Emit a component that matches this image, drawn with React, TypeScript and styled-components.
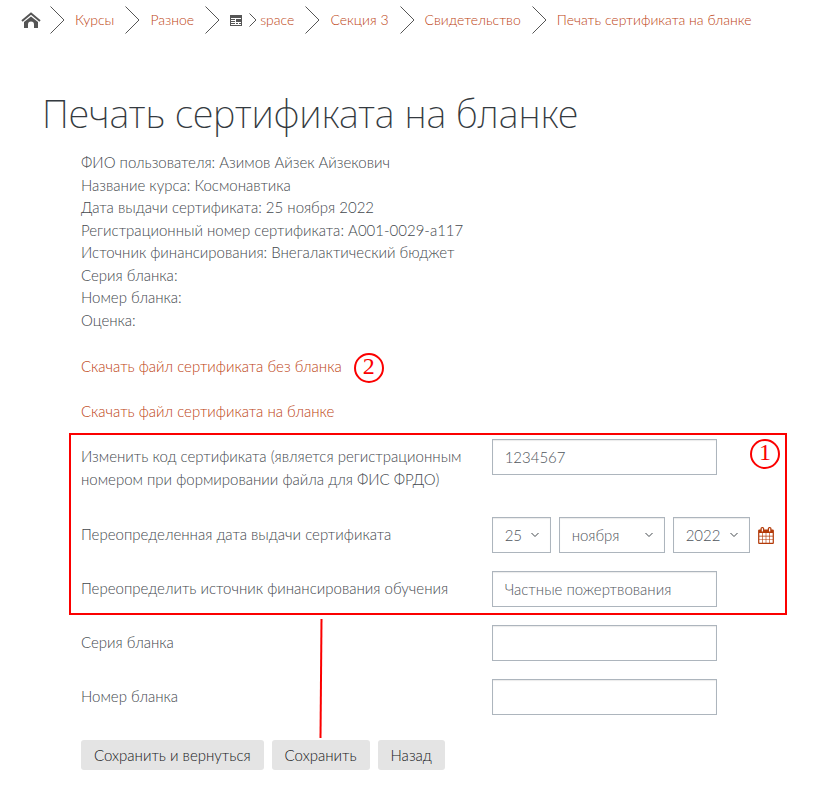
import React from "react";
import styled, { createGlobalStyle } from "styled-components";

const GlobalStyle = createGlobalStyle`
  *, *::before, *::after { box-sizing: border-box; }
  body {
    margin: 0;
    background: #fff;
    color: #43484d;
    font-family: Lato, "Noto Sans", sans-serif;
    font-size: 15px;
    font-weight: 300;
    line-height: 1.5;
  }
`;

const RED = "#fb0000";

const Page = styled.div`
  min-width: 720px;
`;

const Breadcrumbs = styled.nav`
  padding: 6px 21px 0;
  ol {
    display: flex;
    align-items: center;
    height: 28px;
    margin: 0;
    padding: 0;
    list-style: none;
    white-space: nowrap;
    font-size: 14px;
    line-height: 20px;
  }
  li {
    display: flex;
    align-items: center;
  }
`;

const Link = styled.a`
  color: #bd4413;
  text-decoration: none;
  &:hover { text-decoration: underline; }
`;

const HomeLink = styled(Link)`
  display: flex;
`;

const CrumbLink = styled(Link)`
  padding-right: 2px;
`;

const Separator = styled.svg`
  flex: none;
  margin: 0 10px 0 9px;
  fill: none;
  stroke: #555;
`;

const SmallSeparator = styled(Separator)`
  margin: 0 3px 0 7px;
`;

const Main = styled.main`
  padding: 55px 50px 20px 81px;
`;

const Title = styled.h1`
  margin: 0 0 14px -39px;
  color: #343a40;
  font-family: "Noto Sans", sans-serif;
  font-size: 38px;
  font-weight: 200;
  line-height: 48px;
`;

const Details = styled.ul`
  margin: 0 0 24px;
  padding: 0;
  list-style: none;
`;

const Download = styled.p`
  display: flex;
  align-items: center;
  gap: 12px;
  height: 22px;
  margin: 0 0 23px;
`;

const Marker = styled.span`
  flex: none;
  width: 30px;
  height: 30px;
  margin-top: 4px;
  border: 2px solid ${RED};
  border-radius: 50%;
  color: ${RED};
  font: 400 24px/22px "Liberation Serif", serif;
  text-align: center;
`;

const CornerMarker = styled(Marker)`
  position: absolute;
  top: -4px;
  right: -3px;
`;

const Form = styled.form`
  display: flex;
  flex-direction: column;
  gap: 18px;
`;

const Highlighted = styled.div`
  position: relative;
  display: flex;
  flex-direction: column;
  gap: 18px;
  margin-top: -6px;
  &::after {
    content: "";
    position: absolute;
    inset: -6px -10px -8px -12px;
    border: 2px solid ${RED};
    pointer-events: none;
  }
`;

const Pointer = styled.svg`
  position: absolute;
  top: calc(100% + 12px);
  left: 238px;
  stroke: ${RED};
  stroke-width: 2;
  pointer-events: none;
`;

const Field = styled.div<{ $lines?: number }>`
  display: grid;
  grid-template-columns: 59% minmax(0, 1fr);
  align-items: start;
  min-height: ${(p) => (p.$lines === 2 ? 60 : 36)}px;
`;

const Label = styled.label`
  margin: 6px 16px -6px 0;
`;

const TextInput = styled.input`
  width: 225px;
  max-width: 100%;
  height: 36px;
  padding: 0 12px;
  border: 1px solid #adb5bd;
  border-radius: 0;
  background: #fff;
  box-shadow: inset 0 1px 1px rgba(0, 0, 0, 0.08);
  color: #50565c;
  font: inherit;
`;

const DateRow = styled.div`
  display: flex;
  align-items: center;
  gap: 8px;
`;

const SelectBox = styled.div<{ $width: number }>`
  position: relative;
  width: ${(p) => p.$width}px;
  select {
    width: 100%;
    height: 36px;
    padding: 0 24px 0 12px;
    appearance: none;
    border: 1px solid #adb5bd;
    border-radius: 0;
    background: #fff;
    box-shadow: inset 0 1px 1px rgba(0, 0, 0, 0.08);
    color: #50565c;
    font: inherit;
  }
  svg {
    position: absolute;
    top: 14px;
    right: 12px;
    fill: none;
    stroke: #43484d;
    pointer-events: none;
  }
`;

const CalendarButton = styled.button`
  display: flex;
  padding: 0;
  border: 0;
  background: none;
  cursor: pointer;
`;

const Actions = styled.div`
  display: flex;
  gap: 8px;
  margin-top: 7px;
`;

const Button = styled.button`
  height: 30px;
  padding: 0 13px;
  border: 0;
  border-radius: 3px;
  background: #e4e4e4;
  color: #16181a;
  font: inherit;
`;

const HomeIcon = () => (
  <svg width="20" height="16" viewBox="0 0 20 16" aria-hidden="true">
    <path d="M1 9 10 1.500 19 9" fill="none" stroke="#555" strokeWidth="2" />
    <path d="M3 10 10 4.500l7 5.500V16h-4v-3.500a3 3 0 0 0-6 0V16H3z" fill="#555" />
  </svg>
);

const PageIcon = () => (
  <svg width="12" height="11" viewBox="0 0 12 11" fill="#555" aria-hidden="true">
    <path d="M0 0h12v11H0zM1 3v7h10V3z" fillRule="evenodd" />
    <path d="M1 4h4v1H1zM1 6h4v1H1zM1 8h4v1H1zM6 4h5v3H6zM6 8h2v1H6zM9 8h2v1H9z" />
  </svg>
);

const BigChevron = () => (
  <Separator width="15" height="28" viewBox="0 0 15 28" aria-hidden="true">
    <path d="M.5.5 14 14 .5 27.500" />
  </Separator>
);

const CalendarIcon = () => (
  <svg width="16" height="17" viewBox="0 0 1664 1792" fill="#b33a08" aria-hidden="true">
    <path d="M128 1664h288v-288h-288v288zm352 0h320v-288h-320v288zm-352-352h288v-320h-288v320zm352 0h320v-320h-320v320zm-352-384h288v-288h-288v288zm736 736h320v-288h-320v288zm-384-736h320v-288h-320v288zm768 736h288v-288h-288v288zm-384-352h320v-320h-320v320zm-352-864v-288q0-13-9.500-22.500t-22.500-9.500h-64q-13 0-22.500 9.500t-9.500 22.500v288q0 13 9.500 22.500t22.500 9.500h64q13 0 22.500-9.500t9.500-22.500zm736 864h288v-320h-288v320zm-384-384h320v-288h-320v288zm384 0h288v-288h-288v288zm32-480v-288q0-13-9.500-22.500t-22.500-9.500h-64q-13 0-22.500 9.500t-9.500 22.500v288q0 13 9.500 22.500t22.500 9.500h64q13 0 22.500-9.500t9.500-22.500zm384-64v1280q0 52-38 90t-90 38h-1408q-52 0-90-38t-38-90v-1280q0-52 38-90t90-38h128v-96q0-66 47-113t113-47h64q66 0 113 47t47 113v96h384v-96q0-66 47-113t113-47h64q66 0 113 47t47 113v96h128q52 0 90 38t38 90z" />
  </svg>
);

const details = [
  "ФИО пользователя: Азимов Айзек Айзекович",
  "Название курса: Космонавтика",
  "Дата выдачи сертификата: 25 ноября 2022",
  "Регистрационный номер сертификата: A001-0029-a117",
  "Источник финансирования: Внегалактический бюджет",
  "Серия бланка:",
  "Номер бланка:",
  "Оценка:",
];

function Select({ id, label, value, width }: { id: string; label: string; value: string; width: number }) {
  return (
    <SelectBox $width={width}>
      <select id={id} aria-label={label} defaultValue={value}>
        <option>{value}</option>
      </select>
      <svg width="8" height="8" viewBox="0 0 8 8" aria-hidden="true">
        <path d="M.5 2 4 5.500 7.500 2" />
      </svg>
    </SelectBox>
  );
}

function Crumb({ href, children }: { href: string; children: React.ReactNode }) {
  return (
    <li>
      <BigChevron />
      <CrumbLink href={href}>{children}</CrumbLink>
    </li>
  );
}

export default function App() {
  return (
    <Page>
      <GlobalStyle />
      <Breadcrumbs>
        <ol>
          <li>
            <HomeLink href="#home" aria-label="В начало">
              <HomeIcon />
            </HomeLink>
          </li>
          <Crumb href="#courses">Курсы</Crumb>
          <Crumb href="#misc">Разное</Crumb>
          <li>
            <BigChevron />
            <PageIcon />
            <SmallSeparator width="8" height="14" viewBox="0 0 8 14" aria-hidden="true">
              <path d="M.5.5 7 7 .5 13.500" />
            </SmallSeparator>
            <CrumbLink href="#space">space</CrumbLink>
          </li>
          <Crumb href="#section">Секция 3</Crumb>
          <Crumb href="#certificate">Свидетельство</Crumb>
          <Crumb href="#print">Печать сертификата на бланке</Crumb>
        </ol>
      </Breadcrumbs>
      <Main>
        <Title>Печать сертификата на бланке</Title>
        <Details>
          {details.map((line) => (
            <li key={line}>{line}</li>
          ))}
        </Details>
        <Download>
          <Link href="#plain">Скачать файл сертификата без бланка</Link>
          <Marker>2</Marker>
        </Download>
        <Download>
          <Link href="#blank">Скачать файл сертификата на бланке</Link>
        </Download>
        <Form onSubmit={(e) => e.preventDefault()}>
          <Highlighted>
            <Field $lines={2}>
              <Label htmlFor="code">
                Изменить код сертификата (является регистрационным номером при формировании файла для ФИС ФРДО)
              </Label>
              <TextInput id="code" defaultValue="1234567" />
            </Field>
            <Field>
              <Label htmlFor="day">Переопределенная дата выдачи сертификата</Label>
              <DateRow>
                <Select id="day" label="День" value="25" width={59} />
                <Select id="month" label="Месяц" value="ноября" width={106} />
                <Select id="year" label="Год" value="2022" width={77} />
                <CalendarButton type="button" aria-label="Календарь">
                  <CalendarIcon />
                </CalendarButton>
              </DateRow>
            </Field>
            <Field>
              <Label htmlFor="source">Переопределить источник финансирования обучения</Label>
              <TextInput id="source" defaultValue="Частные пожертвования" />
            </Field>
            <CornerMarker>1</CornerMarker>
            <Pointer width="4" height="119" viewBox="0 0 4 119" aria-hidden="true">
              <path d="M2.500 0 1.500 119" />
            </Pointer>
          </Highlighted>
          <Field>
            <Label htmlFor="series">Серия бланка</Label>
            <TextInput id="series" />
          </Field>
          <Field>
            <Label htmlFor="number">Номер бланка</Label>
            <TextInput id="number" />
          </Field>
          <Actions>
            <Button type="submit">Сохранить и вернуться</Button>
            <Button type="button">Сохранить</Button>
            <Button type="button">Назад</Button>
          </Actions>
        </Form>
      </Main>
    </Page>
  );
}
